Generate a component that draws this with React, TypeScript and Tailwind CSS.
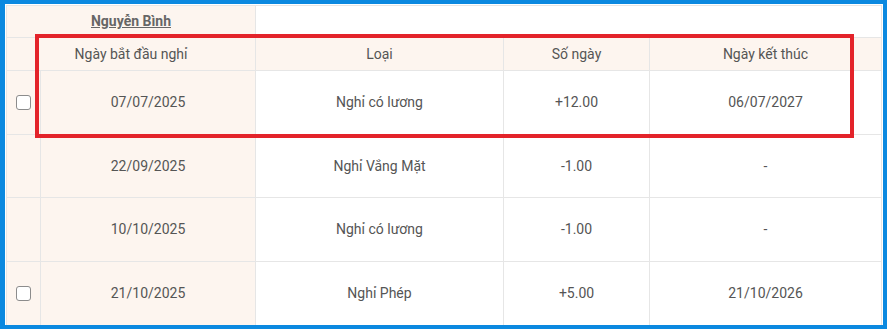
import React from "react";

type Leave = {
  start: string;
  kind: string;
  days: string;
  end: string;
  selectable: boolean;
};

const ROWS: Leave[] = [
  { start: "07/07/2025", kind: "Nghỉ có lương", days: "+12.00", end: "06/07/2027", selectable: true },
  { start: "22/09/2025", kind: "Nghỉ Vắng Mặt", days: "-1.00", end: "-", selectable: false },
  { start: "10/10/2025", kind: "Nghỉ có lương", days: "-1.00", end: "-", selectable: false },
  { start: "21/10/2025", kind: "Nghỉ Phép", days: "+5.00", end: "21/10/2026", selectable: true },
];

const cell = "flex items-center justify-center border-r border-b border-[#e6e6e6]";

export default function App() {
  return (
    <div className="relative h-[329px] w-[887px] overflow-hidden border-l-[5px] border-y-4 border-r-4 border-[#0b89e0] bg-white pl-px pt-px pr-px font-['Roboto',sans-serif] text-[14px] text-[#555]">
      <div className="grid grid-cols-[34px_215px_248px_146px_232px] border-l border-t border-[#e6e6e6]">
        {/* employee group row */}
        <div className={`${cell} col-span-2 h-[32px] bg-[#fdf5ef] font-bold text-[#666] underline`}>
          Nguyễn Bình
        </div>
        <div className={`${cell} col-span-3 h-[32px]`} />

        {/* column headings */}
        <div className={`${cell} col-span-2 h-[33px] bg-[#fdf5ef]`}>Ngày bắt đầu nghỉ</div>
        <div className={`${cell} h-[33px] bg-[#fdf5ef]`}>Loại</div>
        <div className={`${cell} h-[33px] bg-[#fdf5ef]`}>Số ngày</div>
        <div className={`${cell} h-[33px] bg-[#fdf5ef]`}>Ngày kết thúc</div>

        {ROWS.map((r, i) => (
          <React.Fragment key={i}>
            <div className={`${cell} h-[63.7px] bg-[#fdf5ef]`}>
              {r.selectable && (
                <span className="block h-[15px] w-[15px] rounded-[3px] border-[1.5px] border-[#8c8c8c] bg-white" />
              )}
            </div>
            <div className={`${cell} h-[63.7px] bg-[#fdf5ef]`}>{r.start}</div>
            <div className={`${cell} h-[63.7px]`}>{r.kind}</div>
            <div className={`${cell} h-[63.7px]`}>{r.days}</div>
            <div className={`${cell} h-[63.7px]`}>{r.end}</div>
          </React.Fragment>
        ))}
      </div>

      {/* highlight frame around the first entry */}
      <div className="absolute left-[30px] top-[30px] h-[104px] w-[819px] border-4 border-[#e3232a]" />
    </div>
  );
}
